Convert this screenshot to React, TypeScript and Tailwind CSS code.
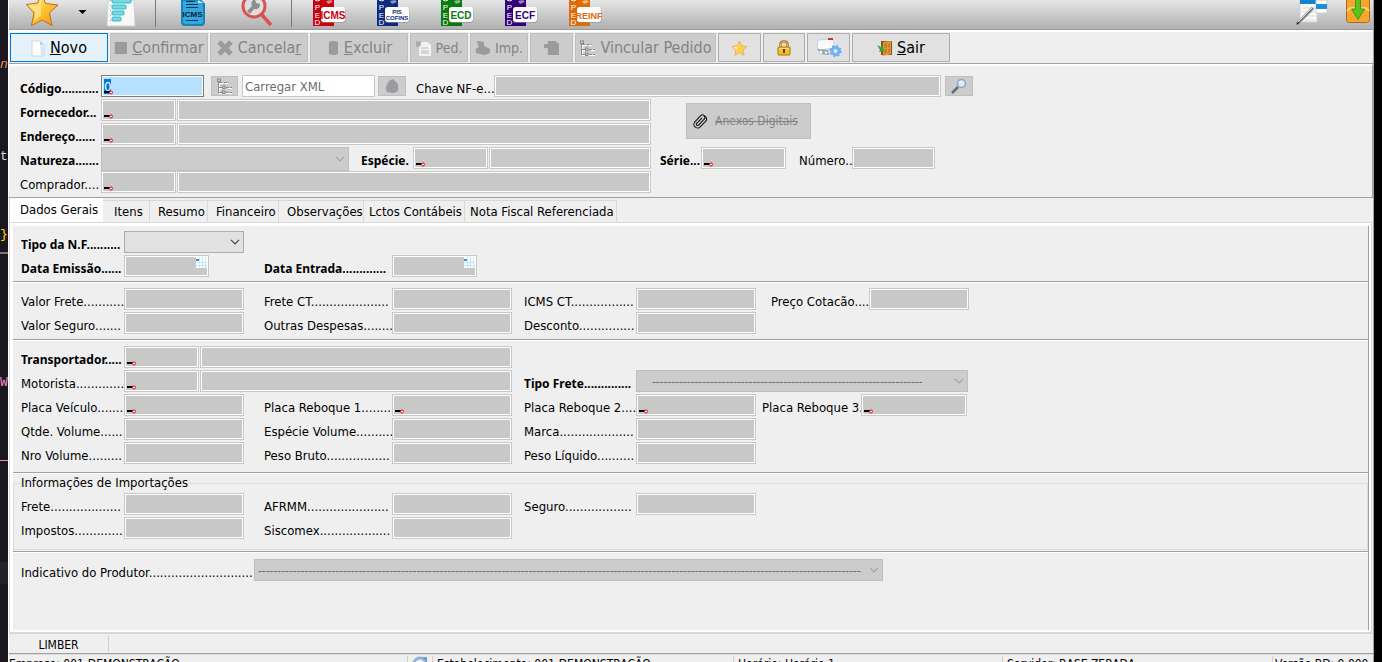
import React, { useEffect, useId, useRef } from 'react';

const STAR = 'M12 1.5l3.1 6.9 7.4.8-5.5 5 1.5 7.4L12 17.9l-6.5 3.7L7 14.2l-5.500-5 7.400-.8z';

function Marker() {
  return (
    <svg className="pointer-events-none absolute bottom-0.5 left-[3px]" width="10" height="5" aria-hidden="true">
      <rect x="0" y="1" width="6" height="2" fill="#000" />
      <circle cx="7" cy="2.500" r="1.500" fill="#fff" stroke="#f00010" strokeWidth="1" />
    </svg>
  );
}

function GridIcon() {
  return (
    <svg className="pointer-events-none absolute top-0.5 right-0.5" width="11" height="11" aria-hidden="true">
      <rect width="11" height="11" fill="#fff" />
      <path d="M0 5.500h11M0 8.500h11M3.500 0v11M6.500 0v11M9.500 0v11" stroke="#bfeafa" />
      <rect y="2" width="3" height="2" fill="#1e9be0" />
    </svg>
  );
}

type LabelProps = { text: string; dots?: number; w: string; bold?: boolean; htmlFor?: string };

function Label({ text, dots = 0, w, bold, htmlFor }: LabelProps) {
  const weight = bold
    ? "font-bold text-[12px] font-['Noto_Sans',sans-serif]"
    : 'text-[13px]';
  return (
    <label
      htmlFor={htmlFor}
      className={`${w} ${weight} mt-[5px] h-[17px] shrink-0 overflow-hidden leading-[17px] whitespace-nowrap text-black`}
    >
      {text}
      {'.'.repeat(dots)}
    </label>
  );
}

type BoxProps = { w: string; id?: string; name?: string; mark?: boolean; calendar?: boolean };

function Box({ w, id, name, mark, calendar }: BoxProps) {
  return (
    <span className={`${w} relative block h-[22px] shrink-0`}>
      <input
        id={id}
        aria-label={name}
        disabled
        className="block h-full w-full border border-[#c8c8c8] bg-[#c8c8c8] px-1 text-[13px] shadow-[inset_0_0_0_1px_white]"
      />
      {mark && <Marker />}
      {calendar && <GridIcon />}
    </span>
  );
}

type FieldProps = {
  text: string;
  dots: number;
  lw: string;
  w: string;
  bold?: boolean;
  mark?: boolean;
  calendar?: boolean;
  extra?: string;
};

function Field({ text, dots, lw, w, bold, mark, calendar, extra }: FieldProps) {
  const id = useId();
  return (
    <div className="flex">
      <Label text={text} dots={dots} w={lw} bold={bold} htmlFor={id} />
      <Box w={w} id={id} mark={mark} calendar={calendar} />
      {extra && (
        <span className="ml-px flex">
          <Box w={extra} name={`${text} descrição`} />
        </span>
      )}
    </div>
  );
}

type SelectProps = {
  text: string;
  dots: number;
  lw: string;
  w: string;
  h: string;
  bold?: boolean;
  disabled?: boolean;
  pad?: string;
  value?: string;
};

function SelectField({ text, dots, lw, w, h, bold, disabled, pad = 'pl-1', value = '' }: SelectProps) {
  const id = useId();
  return (
    <div className="flex">
      <Label text={text} dots={dots} w={lw} bold={bold} htmlFor={id} />
      <span className={`${w} ${h} relative block shrink-0`}>
        <select
          id={id}
          disabled={disabled}
          className={`${pad} block h-full w-full appearance-none border pt-0.5 pr-5 text-[12px] font-['Noto_Sans',sans-serif] text-[#6d6d6d] opacity-100 ${
            disabled ? 'border-[#bfbfbf] bg-[#cccccc]' : 'border-[#adadad] bg-[#e1e1e1]'
          }`}
        >
          <option>{value}</option>
        </select>
        <svg
          className={`pointer-events-none absolute top-1/2 right-1 -translate-y-1/2 ${disabled ? 'text-[#a3a3a3]' : 'text-[#444]'}`}
          width="10"
          height="6"
          aria-hidden="true"
        >
          <path d="M1 .8l4 4 4-4" fill="none" stroke="currentColor" strokeWidth="1.200" />
        </svg>
      </span>
    </div>
  );
}

function TreeIcon() {
  return (
    <svg width="17" height="17" viewBox="0 0 17 17" fill="none" aria-hidden="true">
      <path d="M3.500 4v12M4 5.500h3M4 10.500h3M4 15.500h12M9 5.500h4M12 10.500h4" stroke="#fff" />
      <path d="M2.500 3v12M3 4.500h3M3 9.500h3M3 14.500h3" stroke="#8a8a8a" />
      <path d="M8 4.500h5M10 9.500h6M10 14.500h6" stroke="#8a8a8a" strokeDasharray="3 1" />
      <rect x="1.500" y="1" width="3" height="2.500" stroke="#8a8a8a" />
      <rect x="6.500" y="8" width="2.500" height="2.500" stroke="#8a8a8a" />
      <rect x="6.500" y="13" width="2.500" height="2.500" stroke="#8a8a8a" />
    </svg>
  );
}

function BlobIcon({ d, w = 16 }: { d: string; w?: number }) {
  return (
    <svg width={w} height="16" viewBox={`0 0 ${w} 16`} aria-hidden="true">
      <path d={d} fill="#b9c4cd" transform="translate(-1 0)" />
      <path d={d} fill="#9a9a9f" />
    </svg>
  );
}

type ActionProps = {
  w: string;
  children: React.ReactNode;
  disabled?: boolean;
  active?: boolean;
  name?: string;
  size?: string;
};

function Action({ w, children, disabled, active, name, size = 'text-[16px]' }: ActionProps) {
  const tone = active
    ? 'border-[#0078d7] bg-[#e5f1fb] text-black'
    : disabled
      ? 'border-[#bfbfbf] bg-[#cccccc] text-[#838383]'
      : 'border-[#adadad] bg-[#e1e1e1] text-black';
  return (
    <button
      type="button"
      aria-label={name}
      disabled={disabled}
      className={`${w} ${tone} ${size} flex h-[29px] shrink-0 items-center justify-center gap-1 border pt-px whitespace-nowrap`}
    >
      {children}
    </button>
  );
}

function Sped({ color, lines, name }: { color: string; lines: string[]; name: string }) {
  const one = lines.length === 1;
  const narrow = lines[0].length > 3;
  return (
    <button type="button" aria-label={name} className="mr-[31px] h-[29px] w-[33px] shrink-0">
      <svg width="33" height="29" viewBox="0 0 33 29" aria-hidden="true">
        <path d="M0 0h21v26H0z" fill={color} />
        <path d="M2 0q2.500 2 5 0" fill="none" stroke="#fff" />
        <g fill="#fff" fontFamily="Liberation Sans, sans-serif" fontSize="8" textAnchor="middle">
          <text x="4.500" y="9.500">P</text>
          <text x="4.500" y="17.500">E</text>
          <text x="4.500" y="25">D</text>
        </g>
        <path d="M13 1l5-1 2 2-5 2z" fill="#fff" opacity=".5" />
        <rect x="8" y="8" width="24.500" height="15" rx="3" fill="#8f8f8f" opacity=".6" />
        <rect x="8" y="7" width="24" height="15" rx="3" fill="#fff" />
        {one ? (
          <text
            x="20"
            y="18.500"
            fill={color}
            fontFamily={narrow ? 'Liberation Sans Narrow, Liberation Sans, sans-serif' : 'Liberation Sans, sans-serif'}
            fontWeight="bold"
            fontSize={narrow ? (lines[0].length > 4 ? 9 : 10) : 10}
            textAnchor="middle"
          >
            {lines[0]}
          </text>
        ) : (
          <g fill={color} fontFamily="Liberation Sans, sans-serif" fontWeight="bold" textAnchor="middle">
            <text x="20" y="13.500" fontSize="6">{lines[0]}</text>
            <text x="20" y="20" fontSize="6">{lines[1]}</text>
          </g>
        )}
      </svg>
    </button>
  );
}

function TopBar() {
  return (
    <div className="flex h-[30px] shrink-0 border-b border-[#999] bg-linear-to-b from-[#e6e6e6] to-[#b0b0b0] pr-[3px] pl-4">
      <button type="button" aria-label="Favoritos" className="h-[29px] w-[68px] shrink-0">
        <svg width="68" height="29" viewBox="0 0 68 29" aria-hidden="true">
          <defs>
            <linearGradient id="gold" x1="0" y1="0" x2="1" y2="1">
              <stop offset="0" stopColor="#fff6a8" />
              <stop offset=".5" stopColor="#ffc838" />
              <stop offset="1" stopColor="#f08a10" />
            </linearGradient>
          </defs>
          <path d="M16.500 -7l4 10.500L33 5l-8.500 8L27 25.500l-10-5.500-10.500 5.500L9 13 1.500 4.500 12.500 3z" fill="url(#gold)" stroke="#b8741a" />
          <path d="M16 -3l-2.800 9L5 6.500l6 6-2 8 7-5z" fill="#fff3b0" opacity=".55" />
          <path d="M53.500 10h8l-4 4z" fill="#000" />
        </svg>
      </button>
      <button type="button" aria-label="Relatório" className="ml-[13px] h-[29px] w-[31px] shrink-0">
        <svg width="31" height="29" viewBox="0 0 31 29" aria-hidden="true">
          <path d="M2 0h26l1 26H1z" fill="#f8f8f8" stroke="#d0d0d0" />
          <path d="M4.500 0v24" stroke="#aaa" strokeDasharray="1 4" />
          <g fill="#6fdde3" stroke="#1fa9b5" strokeWidth=".8">
            <rect x="6" y="-2" width="19" height="5" rx="1" />
            <rect x="6" y="5" width="14" height="4" rx="1" />
            <rect x="6" y="11" width="12" height="4" rx="1" />
            <rect x="6" y="17" width="9" height="4" rx="1" />
          </g>
        </svg>
      </button>
      <span className="ml-[18px] h-[27px] w-px bg-[#777]" />
      <button type="button" aria-label="ICMS" className="ml-6 h-[29px] w-[26px] shrink-0">
        <svg width="26" height="29" viewBox="0 0 26 29" aria-hidden="true">
          <path d="M2 0v22q0 3 3 3h16q3 0 3-3V4l-5-5z" fill="#33a8e0" stroke="#1483ba" strokeWidth="2" />
          <path d="M6 1.500h9M6 4.500h12M6 7.500h12M6 20.500h12" stroke="#123a52" />
          <path d="M18 0v3h6" fill="#bfe6f8" />
          <text x="12.500" y="17" fill="#10202a" fontFamily="Liberation Sans, sans-serif" fontSize="8" fontWeight="bold" textAnchor="middle">ICMS</text>
        </svg>
      </button>
      <button type="button" aria-label="Pesquisar" className="ml-[34px] h-[29px] w-[34px] shrink-0">
        <svg width="34" height="29" viewBox="0 0 34 29" fill="none" aria-hidden="true">
          <circle cx="14" cy="6" r="11" stroke="#d9534f" strokeWidth="3" fill="#dedede" />
          <path d="M7 11l5-5q-2-5 3-7l1 4 4 1q0 6-6 5l-4 5z" fill="#8e8e8e" />
          <path d="M22 15l9 10" stroke="#d9534f" strokeWidth="3.500" />
        </svg>
      </button>
      <span className="ml-[17px] h-[27px] w-px bg-[#777]" />
      <div className="ml-[21px] flex">
        <Sped name="SPED ICMS" color="#c80010" lines={['ICMS']} />
        <Sped name="SPED PIS COFINS" color="#0c2a80" lines={['PIS', 'COFINS']} />
        <Sped name="SPED ECD" color="#0a7a10" lines={['ECD']} />
        <Sped name="SPED ECF" color="#34007a" lines={['ECF']} />
        <Sped name="SPED REINF" color="#e06a08" lines={['REINF']} />
      </div>
      <button type="button" aria-label="Editar" className="mr-[18px] ml-auto h-[29px] w-8 shrink-0">
        <svg width="32" height="29" viewBox="0 0 32 29" aria-hidden="true">
          <path d="M4 0h17v22H4z" fill="#f8f8f8" stroke="#cfcfcf" />
          <path d="M4 0h16v4H4z" fill="#1382d0" />
          <path d="M6 8h13M6 12h13M6 16h13M6 20h13" stroke="#dcdcdc" />
          <path d="M20 0h11v13H20z" fill="#fff" stroke="#ccc" />
          <path d="M20 4h11v5H20z" fill="#1b90dc" />
          <path d="M1 24L17 8" stroke="#7b7b7b" strokeWidth="3" />
          <path d="M2 22L16 8" stroke="#d8d8d8" />
          <path d="M0 25l3-2-1-1z" fill="#111" />
        </svg>
      </button>
      <button type="button" aria-label="Baixar" className="h-[29px] w-6 shrink-0">
        <svg width="24" height="29" viewBox="0 0 24 29" aria-hidden="true">
          <rect x=".5" y="-8" width="23" height="30.500" rx="3" fill="#f7a52b" stroke="#a86a18" />
          <path d="M1 11q2-3 5-3h12q3 0 5 3" fill="none" stroke="#fbd07a" strokeWidth="2" />
          <path d="M9.500 -2h5v11h4L12 19.500 5.500 9h4z" fill="#5cc21c" stroke="#2f8a10" strokeWidth=".8" />
        </svg>
      </button>
    </div>
  );
}

function ActionBar() {
  return (
    <div className="flex h-[34px] shrink-0 gap-0.5 border-t-2 border-b border-t-white border-b-[#a0a0a0] pt-px pl-px">
      <Action w="w-[98px]" active>
        <svg width="14" height="17" viewBox="0 0 14 17" className="mr-px" aria-hidden="true">
          <path d="M1 1h8l4 4v11H1z" fill="#fff" stroke="#cdd6e4" />
          <path d="M9 1v4h4z" fill="#bccfe6" />
          <path d="M9 5l4 2v9h-3z" fill="#dbe6f4" />
        </svg>
        <span><u>N</u>ovo</span>
      </Action>
      <Action w="w-[98px]" disabled>
        <BlobIcon w={14} d="M1 2h12v12H1z" />
        <span><u>C</u>onfirmar</span>
      </Action>
      <Action w="w-[98px]" disabled>
        <svg width="17" height="16" viewBox="0 0 17 16" aria-hidden="true">
          <path d="M2 2l12 12M14 2L2 14" stroke="#9a9a9f" strokeWidth="5" />
        </svg>
        <span>Cancela<u>r</u></span>
      </Action>
      <Action w="w-[98px]" disabled>
        <BlobIcon w={14} d="M3 2q4-2 9 0v12q-4 2-9 0z" />
        <span><u>E</u>xcluir</span>
      </Action>
      <Action w="w-[58px]" disabled size="text-[14px]">
        <svg width="16" height="16" viewBox="0 0 16 16" aria-hidden="true">
          <path d="M3 2h8l4 3v11H3z" fill="#f2f2f2" />
          <path d="M0 1l5 1-1 4-4 1zM5 8h7M5 11h8M5 13h8" fill="#a8a8a8" stroke="#b8b8b8" />
        </svg>
        Ped.
      </Action>
      <Action w="w-[58px]" disabled size="text-[14px]">
        <BlobIcon d="M2 1l7 1v4l6 3v4l-5 2-9-2V9l3-2z" />
        Imp.
      </Action>
      <Action w="w-[43px]" disabled name="Documento">
        <BlobIcon d="M4 1h7l4 3v11H4V8H0V4h4z" />
      </Action>
      <Action w="w-[141px]" disabled>
        <TreeIcon />
        <span>Vincular Pedido</span>
      </Action>
      <Action w="w-[43px]" name="Favorito">
        <svg width="17" height="17" viewBox="0 0 24 24" aria-hidden="true">
          <path d={STAR} fill="#ffd04a" stroke="#e9a43a" />
          <path d="M12 3l-2.500 6.500-6 .5 5 4z" fill="#fff2b5" />
        </svg>
      </Action>
      <Action w="w-[42px]" name="Bloquear">
        <svg width="14" height="16" viewBox="0 0 14 16" aria-hidden="true">
          <path d="M3.500 8V4.500q0-3 3.500-3t3.500 3V8" fill="none" stroke="#94711a" strokeWidth="2.400" />
          <path d="M3.500 8V4.500q0-3 3.500-3t3.500 3V8" fill="none" stroke="#f3cf62" strokeWidth="1" />
          <rect x="1" y="7" width="12" height="8" rx="1" fill="#f4be2b" stroke="#a87808" />
          <path d="M2 8.500h10" stroke="#ffe58a" />
          <path d="M7 9.500v3.500M6 10h2" stroke="#3c2a04" strokeWidth="1.500" />
        </svg>
      </Action>
      <Action w="w-[43px]" name="Configurar impressão">
        <svg width="26" height="20" viewBox="0 0 26 20" aria-hidden="true">
          <path d="M2 2l15-1 1 9-14 2-3-3z" fill="#fafafa" stroke="#c9d2da" />
          <path d="M12 1h5" stroke="#d2333a" strokeWidth="2" />
          <path d="M1 11l4 5 8 1-1-5z" fill="#8ba5b3" />
          <path d="M4 13l2 2M9 14l2 1" stroke="#fff" strokeWidth="2" />
          <circle cx="19.500" cy="13" r="3.500" fill="#d9ebfc" stroke="#6db2f3" strokeWidth="3" />
          <circle cx="19.500" cy="13" r="5.300" fill="none" stroke="#5aa6f0" strokeWidth="1.500" strokeDasharray="2 2.160" />
        </svg>
      </Action>
      <Action w="w-[98px]">
        <svg width="16" height="17" viewBox="0 0 16 17" aria-hidden="true">
          <path d="M4 1h11v14H4z" fill="#8a5218" />
          <path d="M6 2l8-1v13l-8 2z" fill="#d9983a" />
          <path d="M7 4l3-.5v4L7 8zM11 3.500l2-.3v4l-2 .3zM7 9.500l3-.4v4L7 14zM11 9l2-.3v4l-2 .4z" fill="#c3811f" />
          <path d="M0 5l4 2 1-2 2 6-5 1 1-2z" fill="#2ea63a" />
        </svg>
        <span><u>S</u>air</span>
      </Action>
    </div>
  );
}

function HeaderForm() {
  const codigo = useRef<HTMLInputElement>(null);
  useEffect(() => {
    codigo.current?.focus();
    codigo.current?.select();
  }, []);
  return (
    <div className="flex h-[134px] shrink-0 flex-col gap-0.5 border-t-2 border-r border-b border-t-white border-r-[#a0a0a0] border-b-[#a0a0a0] pt-[9px] pl-[11px]">
      <div className="flex">
        <Label text="Código" dots={11} w="w-[81px]" bold htmlFor="codigo" />
        <span className="relative block h-[22px] w-[103px] shrink-0">
          <input
            id="codigo"
            ref={codigo}
            defaultValue="0"
            className="block h-full w-full border border-[#7a7a7a] bg-[#b5e1ff] pl-0.5 text-[13px] shadow-[inset_0_0_0_1px_white] outline-none selection:bg-[#0078d7] selection:text-white"
          />
          <Marker />
        </span>
        <button type="button" aria-label="Estrutura" disabled className="mt-px ml-[7px] flex h-5 w-[27px] shrink-0 items-center justify-center border border-[#bfbfbf] bg-[#ccc]">
          <TreeIcon />
        </button>
        <input
          aria-label="Carregar XML"
          placeholder="Carregar XML"
          className="ml-1 block h-[22px] w-[133px] shrink-0 border border-[#c8c8c8] bg-white px-0.5 text-[13px] placeholder:text-[#6d6d6d]"
        />
        <button type="button" aria-label="Carregar" disabled className="mt-px mr-2.5 ml-[3px] flex h-5 w-7 shrink-0 items-center justify-center border border-[#bfbfbf] bg-[#ccc]">
          <BlobIcon d="M5 3l4-2 3 3 2 2v7l-4 2-7-1-1-5z" />
        </button>
        <Field text="Chave NF-e" dots={3} lw="w-[78px]" w="w-[447px]" />
        <button type="button" aria-label="Consultar chave" disabled className="mt-px ml-1 flex h-5 w-7 shrink-0 items-center justify-center border border-[#bfbfbf] bg-[#ccc]">
          <svg width="16" height="16" viewBox="0 0 16 16" aria-hidden="true">
            <path d="M1 15l6-6" stroke="#6d6a78" strokeWidth="2.500" />
            <circle cx="10.500" cy="5.500" r="4" fill="#d8ecfb" stroke="#8fa3c4" strokeWidth="1.500" />
            <path d="M8.500 5q1-2 3-1.500" stroke="#fff" fill="none" />
          </svg>
        </button>
      </div>
      <div className="flex">
        <div className="flex flex-col gap-0.5">
          <Field text="Fornecedor" dots={3} lw="w-[81px]" w="w-[75px]" extra="w-[474px]" bold mark />
          <Field text="Endereço" dots={6} lw="w-[81px]" w="w-[75px]" extra="w-[474px]" bold mark />
          <div className="flex h-[22px]">
            <SelectField text="Natureza" dots={7} lw="w-[81px]" w="w-[248px]" h="h-6" bold disabled />
            <div className="ml-3">
              <Field text="Espécie" dots={1} lw="w-[52px]" w="w-[75px]" extra="w-[162px]" bold mark />
            </div>
          </div>
          <Field text="Comprador" dots={4} lw="w-[81px]" w="w-[75px]" extra="w-[474px]" mark />
        </div>
        <div className="flex flex-col gap-2 pt-1 pl-[9px]">
          <button type="button" disabled className="ml-[26px] flex h-9 w-[125px] items-center gap-[7px] border border-[#bfbfbf] bg-[#ccc] pl-[5px] text-[12px] whitespace-nowrap text-[#838383] line-through">
            <svg width="16" height="17" viewBox="0 0 24 24" fill="none" stroke="#111" strokeWidth="1.600" strokeLinecap="round" aria-hidden="true">
              <path d="M21 11l-8.700 9a5.500 5.500 0 0 1-8-7.600L13 3.300a3.700 3.700 0 0 1 5.400 5.200l-8.600 9a1.900 1.900 0 0 1-2.800-2.600l7.800-8.100" />
              <path d="M18 3.500q5 2 3.500 7" />
            </svg>
            Anexos Digitais
          </button>
          <div className="flex gap-[13px]">
            <Field text="Série" dots={3} lw="w-[41px]" w="w-[85px]" bold mark />
            <Field text="Número" dots={2} lw="w-[53px]" w="w-[83px]" />
          </div>
        </div>
      </div>
    </div>
  );
}

function TabStrip() {
  const tab = 'h-[22px] shrink-0 border-t border-r border-[#d9d9d9] text-left';
  return (
    <div role="tablist" className="flex h-6 shrink-0 items-end text-[13px] whitespace-nowrap">
      <button type="button" role="tab" aria-selected="true" className="h-6 w-[94px] shrink-0 border-l border-[#d9d9d9] bg-white pl-2.5 text-left">Dados Gerais</button>
      <button type="button" role="tab" className={`${tab} w-[47px] pl-[11px]`}>Itens</button>
      <button type="button" role="tab" className={`${tab} w-[58px] pl-2`}>Resumo</button>
      <button type="button" role="tab" className={`${tab} w-[71px] pl-2`}>Financeiro</button>
      <button type="button" role="tab" className={`${tab} w-[85px] pl-2`}>Observações</button>
      <button type="button" role="tab" className={`${tab} w-[101px] pl-[5px]`}>Lctos Contábeis</button>
      <button type="button" role="tab" className={`${tab} w-[152px] pl-[5px]`}>Nota Fiscal Referenciada</button>
    </div>
  );
}

const ROWS = 'grid grid-cols-[243px_260px_auto_1fr] content-start items-start gap-y-0.5';
const SECTION = 'border-b border-[#a0a0a0] shadow-[0_1px_0_white] pl-2';

function GeneralTab() {
  return (
    <div role="tabpanel" className="mr-px flex grow flex-col border border-[#d9d9d9] bg-white pt-[3px] pr-0.5 pb-0.5 pl-[3px]">
      <div className="flex grow flex-col border-r border-[#a0a0a0] bg-[#efefef]">
        <div className={`${SECTION} ${ROWS} h-[56px] pt-[5px]`}>
          <SelectField text="Tipo da N.F" dots={10} lw="w-[103px]" w="w-[120px]" h="h-[22px]" bold />
          <span className="col-span-3" />
          <Field text="Data Emissão" dots={6} lw="w-[103px]" w="w-[85px]" bold calendar />
          <Field text="Data Entrada" dots={13} lw="w-[128px]" w="w-[85px]" bold calendar />
        </div>

        <div className={`${SECTION} ${ROWS} h-[58px] pt-1.5`}>
          <Field text="Valor Frete" dots={11} lw="w-[103px]" w="w-[120px]" />
          <Field text="Frete CT" dots={21} lw="w-[128px]" w="w-[120px]" />
          <Field text="ICMS CT" dots={17} lw="w-[112px]" w="w-[120px]" />
          <div className="ml-[15px]">
            <Field text="Preço Cotacão" dots={4} lw="w-[98px]" w="w-[100px]" />
          </div>
          <Field text="Valor Seguro" dots={7} lw="w-[103px]" w="w-[120px]" />
          <Field text="Outras Despesas" dots={8} lw="w-[128px]" w="w-[120px]" />
          <Field text="Desconto" dots={15} lw="w-[112px]" w="w-[120px]" />
        </div>

        <div className={`${SECTION} ${ROWS} h-[133px] pt-1.5`}>
          <div className="col-span-4">
            <Field text="Transportador" dots={5} lw="w-[103px]" w="w-[75px]" extra="w-[312px]" bold mark />
          </div>
          <div className="col-span-2">
            <Field text="Motorista" dots={13} lw="w-[103px]" w="w-[75px]" extra="w-[312px]" mark />
          </div>
          <div className="col-span-2">
            <SelectField text="Tipo Frete" dots={14} lw="w-[112px]" w="w-[332px]" h="h-[22px]" pad="pl-[15px]" bold disabled value={'-'.repeat(70)} />
          </div>
          <Field text="Placa Veículo" dots={7} lw="w-[103px]" w="w-[120px]" mark />
          <Field text="Placa Reboque 1" dots={8} lw="w-[128px]" w="w-[120px]" mark />
          <Field text="Placa Reboque 2" dots={4} lw="w-[112px]" w="w-[120px]" mark />
          <div className="ml-1.5">
            <Field text="Placa Reboque 3" dots={1} lw="w-[99px]" w="w-[106px]" mark />
          </div>
          <Field text="Qtde. Volume" dots={6} lw="w-[103px]" w="w-[120px]" />
          <Field text="Espécie Volume" dots={10} lw="w-[128px]" w="w-[120px]" />
          <Field text="Marca" dots={20} lw="w-[112px]" w="w-[120px]" />
          <span />
          <Field text="Nro Volume" dots={9} lw="w-[103px]" w="w-[120px]" />
          <Field text="Peso Bruto" dots={17} lw="w-[128px]" w="w-[120px]" />
          <Field text="Peso Líquido" dots={10} lw="w-[112px]" w="w-[120px]" />
        </div>

        <div className="h-[79px] border-b border-[#a0a0a0] pt-px shadow-[0_1px_0_white]">
          <fieldset className="h-[76px] border border-[#dcdcdc] pl-[7px]">
            <legend className="h-[18px] text-[13px] leading-[18px]">Informações de Importações</legend>
            <div className={`${ROWS} pt-px`}>
              <Field text="Frete" dots={19} lw="w-[103px]" w="w-[120px]" />
              <Field text="AFRMM" dots={22} lw="w-[128px]" w="w-[120px]" />
              <Field text="Seguro" dots={18} lw="w-[112px]" w="w-[120px]" />
              <span />
              <Field text="Impostos" dots={13} lw="w-[103px]" w="w-[120px]" />
              <Field text="Siscomex" dots={19} lw="w-[128px]" w="w-[120px]" />
            </div>
          </fieldset>
        </div>

        <div className="pt-[7px] pl-2">
          <SelectField text="Indicativo do Produtor" dots={28} lw="w-[233px]" w="w-[629px]" h="h-[22px]" pad="pl-[3px]" disabled value={'-'.repeat(156)} />
        </div>
      </div>
    </div>
  );
}

function StatusBars() {
  const cell = 'shrink-0 overflow-hidden border-r border-[#cfcfcf]';
  return (
    <footer className="shrink-0 text-[12px] whitespace-nowrap">
      <div className="flex h-[21px] items-center border-t border-b border-t-[#d5d5d5] border-b-[#a0a0a0]">
        <span className="flex h-4 w-[100px] items-center justify-center border-r border-[#d0d0d0] pt-0.5">LIMBER</span>
      </div>
      <div className="flex h-2 overflow-hidden border-t border-[#dcdcdc] pt-px leading-[16px]">
        <span className={`${cell} w-[399px]`}>Empresa: 001-DEMONSTRAÇÃO</span>
        <span className={`${cell} w-[25px] pl-1`}>
          <svg width="16" height="16" viewBox="0 0 16 16" aria-hidden="true">
            <circle cx="8" cy="8" r="6" fill="none" stroke="#8eb3d6" strokeWidth="3" />
            <path d="M10 1h5v5z" fill="#6f9cc8" />
          </svg>
        </span>
        <span className={`${cell} w-[301px] pl-1`}>Estabelecimento: 001-DEMONSTRAÇÃO</span>
        <span className={`${cell} w-[269px] pl-1`}>Horário: Horário 1</span>
        <span className={`${cell} grow pl-1`}>Servidor: BASE ZERADA</span>
        <span className="w-[100px] shrink-0 overflow-hidden pl-0.5">Versão BD: 0.000</span>
      </div>
    </footer>
  );
}

function EditorEdge() {
  return (
    <div aria-hidden="true" className="flex w-2 shrink-0 flex-col overflow-hidden bg-[#1b1721] pt-14 font-['Liberation_Mono',monospace] text-[13px] leading-[18px]">
      <span className="h-[92px] text-[#e8935c] italic">n.</span>
      <span className="h-[78px] text-[#d8d8d8]">te</span>
      <span className="h-[26px] text-[#ffd700]">{'}'}</span>
      <span className="h-0.5 shrink-0 bg-[#777]" />
      <span className="h-[120px] shrink-0" />
      <span className="h-[86px] text-[#f286c4]">W</span>
      <span className="h-px shrink-0 bg-[#f286c4]" />
      <span className="mt-[101px] h-[22px] shrink-0 bg-[#25222c]" />
    </div>
  );
}

export default function App() {
  return (
    <div className="flex h-screen overflow-hidden bg-black font-['DejaVu_Sans_Condensed','Noto_Sans',sans-serif]">
      <EditorEdge />
      <main className="flex min-w-0 grow flex-col overflow-hidden border-l border-white bg-[#efefef]">
        <TopBar />
        <ActionBar />
        <HeaderForm />
        <TabStrip />
        <GeneralTab />
        <StatusBars />
      </main>
      <div className="w-[9px] shrink-0 border-l border-[#a0a0a0] bg-black" />
    </div>
  );
}
